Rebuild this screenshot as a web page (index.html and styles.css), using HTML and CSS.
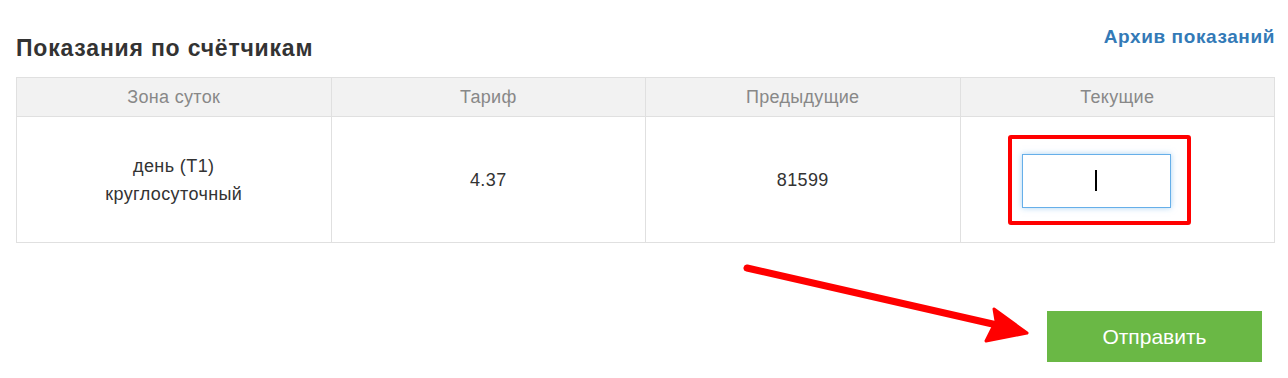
FILE: index.html
```html
<!DOCTYPE html>
<html lang="ru">
<head>
<meta charset="utf-8">
<title>Показания по счётчикам</title>
<link rel="stylesheet" href="styles.css">
</head>
<body>
<div class="page">
  <div class="top">
    <h2 class="title">Показания по счётчикам</h2>
    <a class="archive" href="#">Архив показаний</a>
  </div>
  <table class="meters">
    <thead>
      <tr>
        <th>Зона суток</th>
        <th>Тариф</th>
        <th>Предыдущие</th>
        <th>Текущие</th>
      </tr>
    </thead>
    <tbody>
      <tr>
        <td>день (T1)<br>круглосуточный</td>
        <td>4.37</td>
        <td>81599</td>
        <td class="current">
          <span class="mark"><span class="field"><span class="caret"></span></span></span>
        </td>
      </tr>
    </tbody>
  </table>
  <div class="actions">
    <button class="send" type="button">Отправить</button>
  </div>
</div>
<svg class="arrow" width="1288" height="378" viewBox="0 0 1288 378" xmlns="http://www.w3.org/2000/svg">
  <line x1="747" y1="268" x2="997" y2="325" stroke="#ff0000" stroke-width="7" stroke-linecap="round"/>
  <polygon points="994,309 1027,333 986,341 990,333 996,321" fill="#ff0000" stroke="#ff0000" stroke-width="3" stroke-linejoin="round"/>
</svg>
</body>
</html>
```

FILE: styles.css
```css
html, body {
  margin: 0;
  padding: 0;
  background: #ffffff;
}

body {
  font-family: "Liberation Sans", Arial, sans-serif;
  color: #333333;
  position: relative;
  width: 1288px;
  height: 378px;
  overflow: hidden;
}

.page {
  padding: 0 13px 0 16px;
}

.top {
  display: flex;
  justify-content: space-between;
  align-items: flex-start;
  padding-top: 26px;
}

.title {
  margin: 9px 0 16px 0;
  font-size: 23px;
  line-height: 26px;
  letter-spacing: 0.8px;
  font-weight: bold;
  color: #333333;
}

.archive {
  font-size: 19px;
  line-height: 22px;
  letter-spacing: 0.6px;
  font-weight: bold;
  color: #337ab7;
  text-decoration: none;
}

.meters {
  width: 1259px;
  border-collapse: collapse;
  table-layout: fixed;
  font-size: 18px;
  letter-spacing: 0.4px;
}

.meters th,
.meters td {
  border: 1px solid #e0e0e0;
  text-align: center;
  vertical-align: middle;
  padding: 0;
}

.meters th {
  background: #f2f2f2;
  color: #888888;
  font-weight: normal;
  font-size: 18px;
  letter-spacing: 0.3px;
  height: 38px;
}

.meters td {
  height: 125px;
  line-height: 28px;
  color: #333333;
}

.meters td.current {
  text-align: left;
  padding-left: 47px;
}

.mark {
  display: inline-block;
  vertical-align: middle;
  border: 4px solid #ff0000;
  border-radius: 3px;
  padding: 15px 16px 13px 10px;
  line-height: 0;
}

.field {
  display: inline-flex;
  align-items: center;
  justify-content: center;
  box-sizing: border-box;
  width: 149px;
  height: 54px;
  border: 1px solid #66afe9;
  box-shadow: 0 0 6px rgba(102, 175, 233, 0.55);
  background: #ffffff;
}

.caret {
  display: block;
  width: 2px;
  height: 21px;
  background: #000000;
}

.actions {
  display: flex;
  justify-content: flex-end;
  margin-top: 68px;
}

.send {
  width: 215px;
  height: 51px;
  margin-right: 13px;
  border: none;
  background: #6ab845;
  color: #ffffff;
  font-family: "Liberation Sans", Arial, sans-serif;
  font-size: 21px;
  padding: 0;
}

.arrow {
  position: absolute;
  left: 0;
  top: 0;
  pointer-events: none;
}
```
